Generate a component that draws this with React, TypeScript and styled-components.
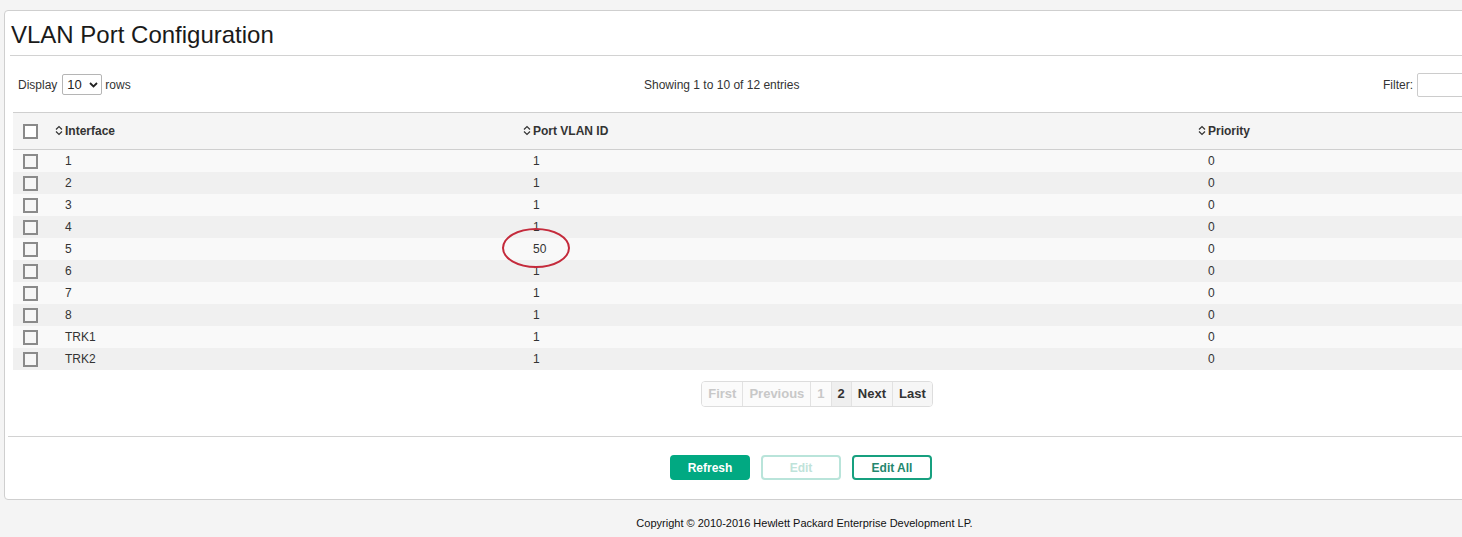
import React from "react";
import styled, { createGlobalStyle } from "styled-components";

const Global = createGlobalStyle`
  html, body { margin: 0; padding: 0; overflow: hidden; }
  body {
    background: #f4f4f4;
    font-family: "Liberation Sans", Arial, sans-serif;
    color: #333;
  }
`;

const Page = styled.div`
  width: 1602px;
  padding-top: 10px;
`;

const Panel = styled.div`
  margin-left: 4px;
  width: 1594px;
  box-sizing: border-box;
  background: #fff;
  border: 1px solid #cfcfcf;
  border-radius: 4px;
  padding-bottom: 19px;
`;

const Title = styled.h1`
  margin: 0 0 0 5px;
  padding: 10px 0 6px 1px;
  font-size: 24px;
  line-height: 28px;
  font-weight: normal;
  color: #1a1a1a;
  border-bottom: 1px solid #d2d2d2;
`;

const Toolbar = styled.div`
  display: grid;
  grid-template-columns: 626px auto 1fr;
  align-items: center;
  height: 56px;
  padding: 1px 8px 0 13px;
  box-sizing: border-box;
  font-size: 12px;
  color: #333;
`;

const Length = styled.div`
  display: flex;
  align-items: center;
`;

const SelectBox = styled.div`
  display: flex;
  align-items: center;
  justify-content: space-between;
  box-sizing: border-box;
  width: 40px;
  height: 21px;
  margin: 0 3px 0 5px;
  padding: 0 3px 0 4px;
  border: 1px solid #b5b5b5;
  border-radius: 2px;
  background: #fff;
  color: #222;
  font-size: 13px;
`;

const Info = styled.div`
  font-size: 12px;
`;

const FilterWrap = styled.label`
  justify-self: end;
  display: flex;
  align-items: center;
  gap: 4px;
`;

const FilterInput = styled.input`
  width: 172px;
  height: 24px;
  box-sizing: border-box;
  border: 1px solid #ccc;
  border-radius: 2px;
  outline: none;
`;

const Table = styled.table`
  margin: 0 8px;
  width: 1576px;
  border-collapse: collapse;
  table-layout: fixed;
  font-size: 12px;
`;

const HeadRow = styled.tr`
  background: #f5f5f5;
  border-top: 1px solid #cfcfcf;
  border-bottom: 1px solid #cfcfcf;
`;

const Th = styled.th<{ $w?: number }>`
  width: ${(p) => (p.$w ? `${p.$w - 5}px` : "auto")};
  height: 35px;
  padding: 1px 0 0 5px;
  text-align: left;
  font-weight: bold;
  color: #333;
`;

const ThInner = styled.span`
  display: inline-flex;
  align-items: center;
  gap: 2px;
`;

const BodyRow = styled.tr<{ $alt: boolean }>`
  background: ${(p) => (p.$alt ? "#f0f0f0" : "#f9f9f9")};
`;

const Td = styled.td`
  height: 22px;
  padding: 0 0 0 15px;
  color: #333;
`;

const CheckCell = styled.td`
  height: 22px;
  padding: 0 0 0 10px;
`;

const CheckTh = styled.th`
  width: 27px;
  padding: 0 0 0 10px;
  text-align: left;
`;

const Box = styled.span<{ $head?: boolean }>`
  display: block;
  width: 15px;
  height: 15px;
  box-sizing: border-box;
  border: 2px solid #8a8a8a;
  background: ${(p) => (p.$head ? "#fff" : "#f6f6f6")};
`;

const Marked = styled.span`
  position: relative;
  display: inline-block;
`;

const Circle = styled.span`
  position: absolute;
  left: -31px;
  top: -14px;
  width: 68px;
  height: 40px;
  box-sizing: border-box;
  border: 2px solid #c42a3b;
  border-radius: 50%;
  pointer-events: none;
`;

const PagerRow = styled.div`
  display: flex;
  justify-content: center;
  margin: 11px 0 0 32px;
`;

const Pager = styled.div`
  display: flex;
  border: 1px solid #ddd;
  border-radius: 4px;
  overflow: hidden;
  background: #fff;
`;

const PageBtn = styled.span<{ $disabled?: boolean; $active?: boolean }>`
  padding: 0 6px;
  line-height: 24px;
  font-size: 13px;
  font-weight: bold;
  color: ${(p) => (p.$disabled ? "#c8c8c8" : "#333")};
  background: ${(p) => (p.$active ? "#efefef" : p.$disabled ? "#fbfbfb" : "#f6f6f6")};
  & + & {
    border-left: 1px solid #e2e2e2;
  }
`;

const Divider = styled.div`
  margin: 29px 0 0 3px;
  border-top: 1px solid #d2d2d2;
`;

const Actions = styled.div`
  display: flex;
  justify-content: center;
  gap: 11px;
  margin-top: 18px;
`;

const Btn = styled.button<{ $variant: "primary" | "disabled" | "outline" }>`
  width: 80px;
  height: 25px;
  box-sizing: border-box;
  border-radius: 4px;
  font-family: "Liberation Sans", Arial, sans-serif;
  font-size: 12px;
  font-weight: bold;
  padding: 0;
  cursor: pointer;
  ${(p) =>
    p.$variant === "primary"
      ? "background:#01a982;border:2px solid #01a982;color:#fff;"
      : p.$variant === "disabled"
      ? "background:#fff;border:2px solid #b9e4da;color:#bfe3da;"
      : "background:#fff;border:2px solid #17a07f;color:#23876e;"}
`;

const Footer = styled.div`
  margin-top: 17px;
  padding-left: 7px;
  text-align: center;
  font-size: 11px;
  line-height: 13px;
  color: #111;
`;

const SortIcon = () => (
  <svg width="8" height="11" viewBox="0 0 8 11" fill="none">
    <polyline points="1,4.5 4,1.5 7,4.5" stroke="#333" strokeWidth="1.2" />
    <polyline points="1,6.5 4,9.5 7,6.5" stroke="#333" strokeWidth="1.2" />
  </svg>
);

const Chevron = () => (
  <svg width="9" height="6" viewBox="0 0 9 6" fill="none">
    <polyline points="1,1 4.5,4.5 8,1" stroke="#222" strokeWidth="1.8" />
  </svg>
);

const rows = [
  { name: "1", pvid: "1" },
  { name: "2", pvid: "1" },
  { name: "3", pvid: "1" },
  { name: "4", pvid: "1" },
  { name: "5", pvid: "50", mark: true },
  { name: "6", pvid: "1" },
  { name: "7", pvid: "1" },
  { name: "8", pvid: "1" },
  { name: "TRK1", pvid: "1" },
  { name: "TRK2", pvid: "1" },
];

export default function App() {
  return (
    <>
      <Global />
      <Page>
        <Panel>
          <Title>VLAN Port Configuration</Title>
          <Toolbar>
            <Length>
              Display
              <SelectBox>
                10 <Chevron />
              </SelectBox>
              rows
            </Length>
            <Info>Showing 1 to 10 of 12 entries</Info>
            <FilterWrap>
              Filter:
              <FilterInput type="text" />
            </FilterWrap>
          </Toolbar>
          <Table>
            <thead>
              <HeadRow>
                <CheckTh>
                  <Box $head />
                </CheckTh>
                <Th $w={468}>
                  <ThInner>
                    <SortIcon />
                    Interface
                  </ThInner>
                </Th>
                <Th $w={675}>
                  <ThInner>
                    <SortIcon />
                    Port VLAN ID
                  </ThInner>
                </Th>
                <Th>
                  <ThInner>
                    <SortIcon />
                    Priority
                  </ThInner>
                </Th>
              </HeadRow>
            </thead>
            <tbody>
              {rows.map((r, i) => (
                <BodyRow key={r.name} $alt={i % 2 === 1}>
                  <CheckCell>
                    <Box />
                  </CheckCell>
                  <Td>{r.name}</Td>
                  <Td>
                    {r.mark ? (
                      <Marked>
                        {r.pvid}
                        <Circle />
                      </Marked>
                    ) : (
                      r.pvid
                    )}
                  </Td>
                  <Td>0</Td>
                </BodyRow>
              ))}
            </tbody>
          </Table>
          <PagerRow>
            <Pager>
              <PageBtn $disabled>First</PageBtn>
              <PageBtn $disabled>Previous</PageBtn>
              <PageBtn $disabled>1</PageBtn>
              <PageBtn $active>2</PageBtn>
              <PageBtn>Next</PageBtn>
              <PageBtn>Last</PageBtn>
            </Pager>
          </PagerRow>
          <Divider />
          <Actions>
            <Btn $variant="primary">Refresh</Btn>
            <Btn $variant="disabled">Edit</Btn>
            <Btn $variant="outline">Edit All</Btn>
          </Actions>
        </Panel>
        <Footer>Copyright © 2010-2016 Hewlett Packard Enterprise Development LP.</Footer>
      </Page>
    </>
  );
}
